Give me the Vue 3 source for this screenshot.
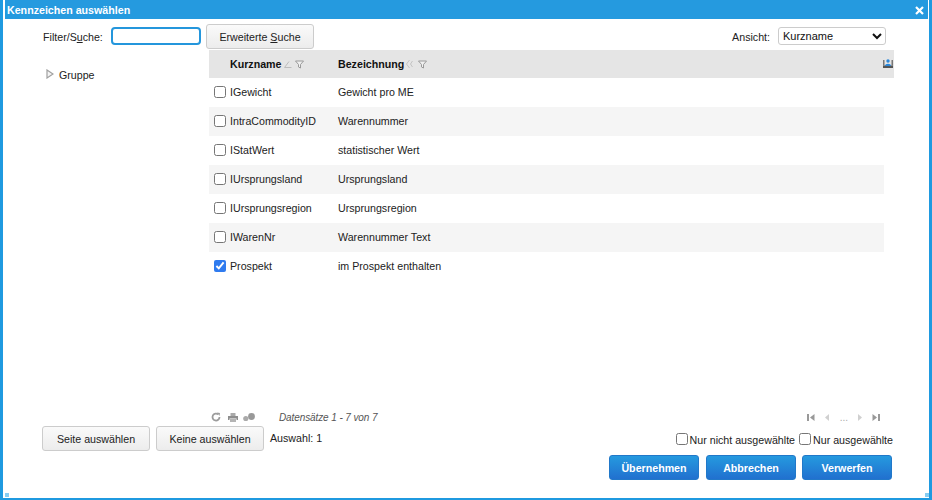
<script setup>
const rows = [
  { name: 'IGewicht', label: 'Gewicht pro ME', checked: false },
  { name: 'IntraCommodityID', label: 'Warennummer', checked: false },
  { name: 'IStatWert', label: 'statistischer Wert', checked: false },
  { name: 'IUrsprungsland', label: 'Ursprungsland', checked: false },
  { name: 'IUrsprungsregion', label: 'Ursprungsregion', checked: false },
  { name: 'IWarenNr', label: 'Warennummer Text', checked: false },
  { name: 'Prospekt', label: 'im Prospekt enthalten', checked: true }
]
</script>

<template>
  <div class="window">
    <header class="title">
      <span>Kennzeichen auswählen</span>
      <svg class="close" width="9" height="9" viewBox="0 0 9 9"><path d="M1 1l7 7M8 1l-7 7" stroke="#fff" stroke-width="2.2" fill="none"/></svg>
    </header>

    <div class="toolbar">
      <label class="filter-label">Filter/S<u>u</u>che:</label>
      <input class="filter-input" type="text" />
      <button class="btn search">Erweiterte <u>S</u>uche</button>
      <span class="view-label">Ansicht:</span>
      <select class="view-select"><option>Kurzname</option></select>
    </div>

    <div class="content">
      <aside class="tree">
        <svg width="8" height="10" viewBox="0 0 8 10"><path d="M1 1l6 4-6 4z" fill="#f4f4f4" stroke="#a0a0a0" stroke-width="1.2"/></svg>
        <span>Gruppe</span>
      </aside>
      <section class="table">
        <div class="thead">
          <div class="th first">
            <b>Kurzname</b>
            <svg class="sort" width="8" height="9" viewBox="0 0 8 9"><path d="M0.5 7.500h7M0.500 7.500L5 1.500" stroke="#bcbcbc" fill="none"/></svg>
            <svg class="funnel" width="9" height="9" viewBox="0 0 9 9"><path d="M0.5 1h8L5.5 4.500V8L3.500 7V4.500z" fill="#f0f0f0" stroke="#999"/></svg>
          </div>
          <div class="th">
            <b>Bezeichnung</b>
            <svg class="sort wide" width="7" height="10" viewBox="0 0 7 10"><path d="M3.500 1L0.500 5l3 4M6.500 2L4.500 5l2 3" stroke="#c4c4c4" fill="none"/></svg>
            <svg class="funnel wide" width="9" height="9" viewBox="0 0 9 9"><path d="M0.5 1h8L5.5 4.500V8L3.500 7V4.500z" fill="#f0f0f0" stroke="#999"/></svg>
          </div>
          <svg class="person" width="10" height="9" viewBox="0 0 10 9">
            <path d="M0 1h1.500v5.500H0zM8.500 1H10v5.500H8.500z" fill="#777"/>
            <path d="M0 6.500h10V9H0z" fill="#555"/>
            <circle cx="5" cy="2" r="1.700" fill="#2a86d8"/>
            <path d="M2 7c0-3 6-3 6 0z" fill="#2a86d8"/>
          </svg>
        </div>
        <div v-for="(r, i) in rows" :key="r.name" class="row" :class="{ odd: i % 2 === 1 }">
          <div class="cell first">
            <input class="check" type="checkbox" :checked="r.checked" />
            <span>{{ r.name }}</span>
          </div>
          <div class="cell">{{ r.label }}</div>
        </div>
      </section>
    </div>

    <div class="pager">
      <div class="pager-icons">
        <svg width="10" height="10" viewBox="0 0 10 10"><path d="M8.500 5a3.500 3.500 0 1 1-1.200-2.600" fill="none" stroke="#9c9c9c" stroke-width="1.800"/><path d="M6 0.500l3 .5-.5 3z" fill="#9c9c9c"/></svg>
        <svg width="10" height="9" viewBox="0 0 10 9"><path d="M2.500 0h5v3h-5z" fill="#aaa"/><path d="M0 3h10v4H8.500V5.500h-7V7H0z" fill="#8e8e8e"/><path d="M2 6h6v3H2z" fill="#b4b4b4"/></svg>
        <svg class="gears" width="12" height="9" viewBox="0 0 12 9"><circle cx="2.800" cy="5.500" r="2.600" fill="#aaa"/><circle cx="8.500" cy="3.500" r="3.400" fill="#999"/></svg>
      </div>
      <span class="records">Datensätze 1 - 7 von 7</span>
      <div class="pager-nav">
        <svg width="8" height="7" viewBox="0 0 8 7"><path d="M0 0h2v7H0zM7.500 0v7L3 3.500z" fill="#999"/></svg>
        <svg class="nav-gap" width="4" height="7" viewBox="0 0 4 7"><path d="M4 0v7L0 3.500z" fill="#d0d0d0"/></svg>
        <span class="dots">...</span>
        <svg width="4" height="7" viewBox="0 0 4 7"><path d="M0 0v7l4-3.500z" fill="#d0d0d0"/></svg>
        <svg class="nav-gap" width="8" height="7" viewBox="0 0 8 7"><path d="M6 0h2v7H6zM0.500 0v7L5 3.500z" fill="#999"/></svg>
      </div>
    </div>

    <div class="selection">
      <button class="btn select-btn">Seite auswählen</button>
      <button class="btn select-btn">Keine auswählen</button>
      <span class="count">Auswahl: 1</span>
      <label class="only first-only"><input class="check" type="checkbox" />Nur nicht ausgewählte</label>
      <label class="only"><input class="check" type="checkbox" />Nur ausgewählte</label>
    </div>

    <div class="actions">
      <button class="primary">Übernehmen</button>
      <button class="primary">Abbrechen</button>
      <button class="primary">Verwerfen</button>
    </div>

    <i class="grip left"></i>
    <i class="grip right"></i>
  </div>
</template>

<style scoped>
.window {
  position: relative;
  box-sizing: border-box;
  width: 932px;
  height: 500px;
  display: flex;
  flex-direction: column;
  padding: 0 1px 0 2px;
  border-left: 3px solid #1f9ae0;
  border-right: 3px solid #1f9ae0;
  border-bottom: 2px solid #1f9ae0;
  background: #fff;
  font: 10.670px "Liberation Sans", Arial, sans-serif;
  color: #222;
}
.title {
  height: 19px;
  flex: none;
  display: flex;
  align-items: center;
  justify-content: space-between;
  padding: 0 4px 0 2px;
  background: #259adf;
  color: #fff;
  font-size: 10.670px;
  font-weight: bold;
}
.close { margin-bottom: -1px; }
.toolbar {
  height: 31px;
  flex: none;
  display: flex;
  align-items: center;
  padding-left: 38px;
}
.filter-label { width: 68px; margin-top: 4px; }
.filter-input {
  box-sizing: border-box;
  width: 90px;
  height: 18px;
  padding: 0;
  margin-top: 2px;
  border: 2px solid #2496dc;
  border-radius: 4px;
  outline: none;
  background: #fff;
}
.btn {
  box-sizing: border-box;
  height: 25px;
  padding: 0;
  border: 1px solid #ccc;
  border-radius: 3px;
  background: linear-gradient(#fafafa, #ececec);
  color: #222;
  font: 10.670px "Liberation Sans", Arial, sans-serif;
}
.search { width: 108px; margin-left: 5px; margin-top: 4px; }
.view-label { margin-left: auto; margin-right: 8px; margin-top: 4px; }
.view-select {
  box-sizing: border-box;
  width: 108px;
  height: 18px;
  margin-top: 3px;
  margin-right: 42px;
  padding: 0;
  border: 1px solid #ccc;
  border-radius: 3px;
  background: #fff;
  color: #111;
  font: 11px "Liberation Sans", Arial, sans-serif;
}
.content {
  flex: 1;
  min-height: 0;
  display: flex;
}
.tree {
  width: 204px;
  flex: none;
  display: flex;
  align-items: flex-start;
  gap: 5px;
  padding: 19px 0 0 41px;
  box-sizing: border-box;
  line-height: 13px;
}
.table { width: 685px; flex: none; }
.thead {
  height: 28px;
  display: grid;
  grid-template-columns: 129px 1fr;
  align-items: center;
  position: relative;
  background: #e5e5e5;
}
.th { display: flex; align-items: center; color: #111; }
.th.first { padding-left: 21px; }
.th b { font-weight: bold; }
.sort { margin-left: 2px; }
.funnel { margin-left: 3px; }
.funnel.wide { margin-left: 5px; }
.person { position: absolute; right: 1px; top: 9px; }
.row {
  width: 675px;
  height: 29px;
  display: grid;
  grid-template-columns: 129px 1fr;
  align-items: center;
}
.row.odd { background: #f5f5f5; }
.cell { display: flex; align-items: center; padding-bottom: 2px; }
.cell.first { padding-left: 5px; }
.check {
  width: 12px;
  height: 12px;
  margin: 0 4px 0 0;
  flex: none;
  accent-color: #2f7bef;
}
.pager {
  height: 18px;
  flex: none;
  display: flex;
  align-items: center;
  padding-left: 206px;
  color: #555;
}
.pager-icons { display: flex; align-items: center; gap: 7px; width: 68px; }
.gears { margin-left: -2px; }
.records { font-size: 10px; font-style: italic; letter-spacing: -0.1px; }
.pager-nav {
  margin-left: auto;
  margin-right: 48px;
  display: flex;
  align-items: center;
  gap: 9px;
  color: #aaa;
  font-size: 10px;
}
.nav-gap { margin-left: 1px; }
.dots { line-height: 7px; margin: 0 1px 0 2px; }
.selection {
  height: 25px;
  flex: none;
  display: flex;
  align-items: center;
  padding-left: 37px;
  padding-right: 35px;
  gap: 6px;
}
.select-btn { width: 108px; }
.count { margin-bottom: 2px; }
.only {
  display: flex;
  align-items: center;
  margin-top: 2px;
  color: #222;
}
.only .check { margin-right: 2px; margin-bottom: 2px; }
.first-only { margin-left: auto; }
.only + .only { margin-left: -2px; }
.actions {
  flex: none;
  display: flex;
  justify-content: flex-end;
  gap: 6px;
  padding: 4px 36px 18px 0;
}
.primary {
  box-sizing: border-box;
  width: 90px;
  height: 25px;
  padding: 0;
  border: 1px solid #2178c9;
  border-radius: 3px;
  background: linear-gradient(#259adf, #2170cf);
  color: #fff;
  font: bold 10.670px "Liberation Sans", Arial, sans-serif;
}
.primary:nth-child(2) { margin-left: 1px; }
.grip {
  position: absolute;
  bottom: 1px;
  width: 4px;
  height: 4px;
  background: #87cdf2;
}
.grip.left { left: 2px; }
.grip.right { right: 0; }
</style>
